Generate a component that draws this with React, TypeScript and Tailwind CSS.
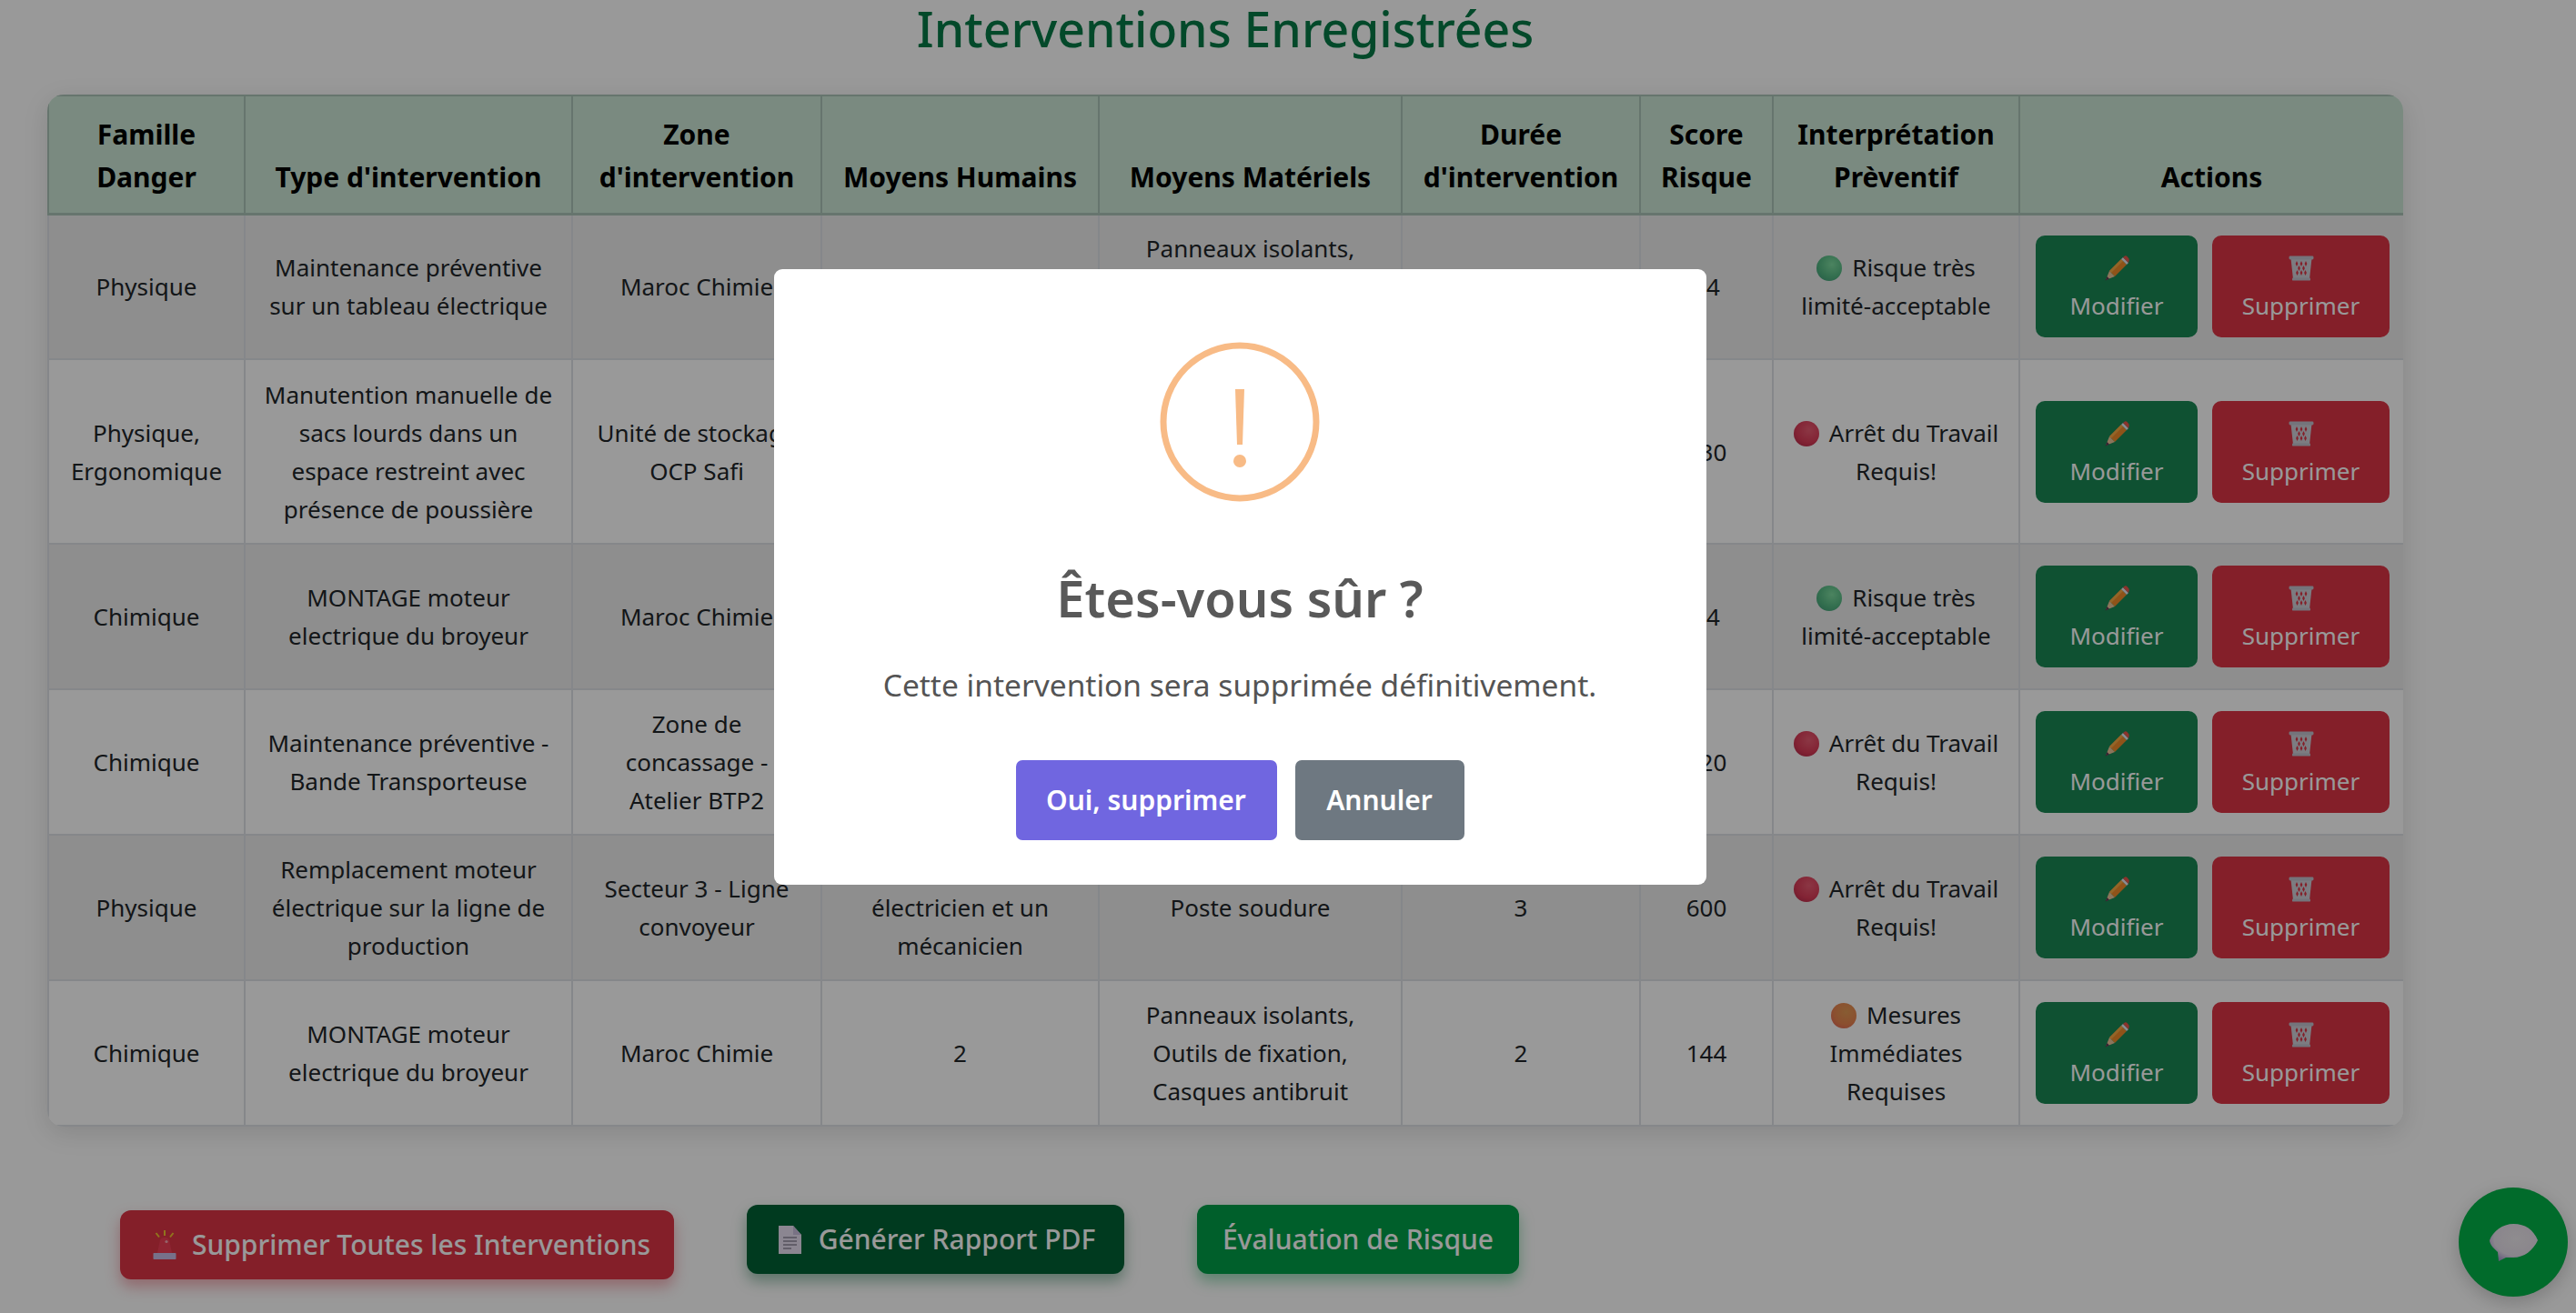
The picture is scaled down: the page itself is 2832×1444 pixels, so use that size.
import type { ReactNode } from "react";

type Level = "green" | "red" | "orange";

type Row = {
  famille: string;
  type: string;
  zone: string;
  humains: string;
  materiels: string;
  duree: string;
  score: string;
  level: Level;
  first: string;
  rest: string;
  height: string;
  odd: boolean;
};

const rows: Row[] = [
  {
    famille: "Physique",
    type: "Maintenance préventive\nsur un tableau électrique",
    zone: "Maroc Chimie",
    humains: "2",
    materiels: "Panneaux isolants,\nOutils de fixation,\nCasques antibruit",
    duree: "2",
    score: "24",
    level: "green",
    first: "Risque très",
    rest: "limité-acceptable",
    height: "h-[160px]",
    odd: true,
  },
  {
    famille: "Physique,\nErgonomique",
    type: "Manutention manuelle de\nsacs lourds dans un\nespace restreint avec\nprésence de poussière",
    zone: "Unité de stockage\nOCP Safi",
    humains: "3",
    materiels: "Chariot,\nGants,\nMasques",
    duree: "3",
    score: "630",
    level: "red",
    first: "Arrêt du Travail",
    rest: "Requis!",
    height: "h-[203px]",
    odd: false,
  },
  {
    famille: "Chimique",
    type: "MONTAGE moteur\nelectrique du broyeur",
    zone: "Maroc Chimie",
    humains: "2",
    materiels: "Panneaux isolants,\nOutils de fixation,\nCasques antibruit",
    duree: "2",
    score: "24",
    level: "green",
    first: "Risque très",
    rest: "limité-acceptable",
    height: "h-[160px]",
    odd: true,
  },
  {
    famille: "Chimique",
    type: "Maintenance préventive -\nBande Transporteuse",
    zone: "Zone de\nconcassage -\nAtelier BTP2",
    humains: "2",
    materiels: "Clés,\nGraisse",
    duree: "4",
    score: "720",
    level: "red",
    first: "Arrêt du Travail",
    rest: "Requis!",
    height: "h-[160px]",
    odd: false,
  },
  {
    famille: "Physique",
    type: "Remplacement moteur\nélectrique sur la ligne de\nproduction",
    zone: "Secteur 3 - Ligne\nconvoyeur",
    humains: "Un\nélectricien et un\nmécanicien",
    materiels: "Poste soudure",
    duree: "3",
    score: "600",
    level: "red",
    first: "Arrêt du Travail",
    rest: "Requis!",
    height: "h-[160px]",
    odd: true,
  },
  {
    famille: "Chimique",
    type: "MONTAGE moteur\nelectrique du broyeur",
    zone: "Maroc Chimie",
    humains: "2",
    materiels: "Panneaux isolants,\nOutils de fixation,\nCasques antibruit",
    duree: "2",
    score: "144",
    level: "orange",
    first: "Mesures",
    rest: "Immédiates\nRequises",
    height: "h-[160px]",
    odd: false,
  },
];

const headers = [
  { label: "Famille\nDanger", width: "w-[216px]" },
  { label: "Type d'intervention", width: "w-[360px]" },
  { label: "Zone\nd'intervention", width: "w-[274px]" },
  { label: "Moyens Humains", width: "w-[305px]" },
  { label: "Moyens Matériels", width: "w-[333px]" },
  { label: "Durée\nd'intervention", width: "w-[262px]" },
  { label: "Score\nRisque", width: "w-[146px]" },
  { label: "Interprétation\nPrèventif", width: "w-[271px]" },
  { label: "Actions", width: "w-[423px]" },
];

function Ball({ level }: { level: Level }) {
  const fill =
    level === "green"
      ? "bg-[radial-gradient(circle_at_60%_35%,#7fdca0,#55b883_55%,#3a9474)]"
      : level === "red"
        ? "bg-[radial-gradient(circle_at_60%_35%,#e85c72,#da3c58_55%,#a82444)]"
        : "bg-[radial-gradient(circle_at_60%_35%,#e29a55,#e8844f_55%,#dc5a5a)]";
  return <span className={`mr-[11px] inline-block h-7 w-7 rounded-full align-[-5px] ${fill}`} />;
}

function PencilIcon() {
  return (
    <svg viewBox="0 0 28 28" className="h-7 w-7">
      <polygon points="6,17 19,4 25,10 12,23" fill="#ee8a2a" />
      <polygon points="6,17 19,4 21,6 8,19" fill="#f7a944" />
      <polygon points="19,4 21,2 27,8 25,10" fill="#e6e6ee" />
      <path d="M21 2 L23 0.5 Q24.5 0 25.5 1 L27.5 3.5 Q28 5 27.5 6 L27 8 Z" fill="#e8554a" />
      <polygon points="6,17 12,23 2,27" fill="#e9c39a" />
      <polygon points="3.5,23 6,25.8 1.5,27.5" fill="#5a3a52" />
    </svg>
  );
}

function TrashIcon() {
  const holes = [
    [9, 9], [14, 9], [19, 9],
    [11.5, 14], [16.5, 14],
    [9.5, 19], [14, 19], [18.5, 19],
  ];
  return (
    <svg viewBox="0 0 28 28" className="h-7 w-7">
      <path d="M2.5 3 L25.5 3 L23 26 L5 26 Z" fill="#cfcfd8" />
      {holes.map(([x, y]) => (
        <polygon key={`${x}-${y}`} points={`${x},${y - 3} ${x + 1.4},${y} ${x},${y + 3} ${x - 1.4},${y}`} fill="#dc3545" />
      ))}
      <rect x="0.5" y="0.5" width="27" height="4" rx="1.4" fill="#c2c2cd" />
      <rect x="4" y="24.4" width="20" height="3.2" rx="1.2" fill="#c2c2cd" />
    </svg>
  );
}

function AlarmIcon() {
  return (
    <svg viewBox="0 0 26 32" className="h-8 w-[26px]">
      <path d="M5 25 L8 11 Q9 8 13 8 Q17 8 18 11 L21 25 Z" fill="#ee3f56" />
      <ellipse cx="15" cy="12.5" rx="1.6" ry="1.6" fill="#f8a7b2" />
      <rect x="0.5" y="25" width="25" height="7" rx="0.8" fill="#c6bde6" />
      <path d="M13 0 V6 M3.5 3 L7 7.5 M22.5 3 L19 7.5" stroke="#f2c230" strokeWidth="2" />
    </svg>
  );
}

function DocIcon() {
  return (
    <svg viewBox="0 0 25 31" className="h-[31px] w-[25px]">
      <path d="M0 0 H16 L25 10 V31 H0 Z" fill="#e8e0f2" />
      <path d="M16 0 L25 10 H16 Z" fill="#c9bfdc" />
      <path d="M5 13 H20 M5 17 H20 M5 21 H20 M5 25 H14" stroke="#8d8699" strokeWidth="1.5" />
    </svg>
  );
}

function ChatIcon() {
  return (
    <svg viewBox="0 0 53 41" className="h-[41px] w-[53px]">
      <defs>
        <radialGradient id="bubble" cx="55%" cy="40%" r="65%">
          <stop offset="0%" stopColor="#eeeaee" />
          <stop offset="70%" stopColor="#e6dfea" />
          <stop offset="100%" stopColor="#a99ad0" />
        </radialGradient>
      </defs>
      <path
        d="M26.5 0 C39 0 48 6 53 18 C48 29 38 37 26 37 C23 37 20 37 18 37 L10 41 L9 31 C5 27 0 23 0 18 C4 8 14 0 26.5 0 Z"
        fill="url(#bubble)"
      />
    </svg>
  );
}

function AlertIcon() {
  return (
    <svg viewBox="0 0 176 176" className="h-[176px] w-[176px]">
      <circle cx="88" cy="88" r="84" fill="none" stroke="#f8bb86" strokeWidth="7" />
      <path d="M83 52 H93 L91 113 H85 Z" fill="#f8bb86" />
      <circle cx="88" cy="131" r="7" fill="#f8bb86" />
    </svg>
  );
}

function ActionButton({ color, icon, label, width }: { color: string; icon: ReactNode; label: string; width: string }) {
  return (
    <button className={`flex h-[112px] flex-col items-center rounded-[10px] pt-[22px] text-[26px] leading-[42px] text-white ${color} ${width}`}>
      {icon}
      <span className="mt-[6px]">{label}</span>
    </button>
  );
}

export default function App() {
  return (
    <div className="relative h-[1444px] overflow-hidden bg-white font-['Noto_Sans',sans-serif] text-[26px] leading-[42px] text-[#212529]">
      <div className="ml-[52px] w-[2590px]">
        <h1 className="h-[104px] text-center text-[53.5px] leading-[64px] font-medium text-[#057a46]">
          Interventions Enregistrées
        </h1>

        <div className="overflow-hidden rounded-[18px] shadow-[0_7px_28px_rgba(0,0,0,0.12)]">
          <table className="w-[2590px] table-fixed border-collapse">
            <thead>
              <tr className="h-[130px] bg-[#cbe6d5]">
                {headers.map((h) => (
                  <th
                    key={h.label}
                    className={`whitespace-pre-line border-2 border-b-[3px] border-[#aac3b7] px-1 pb-4 align-bottom text-[30px] leading-[47px] font-bold text-black ${h.width}`}
                  >
                    {h.label}
                  </th>
                ))}
              </tr>
            </thead>
            <tbody>
              {rows.map((r, i) => (
                <tr key={i} className={`${r.height} ${r.odd ? "bg-[#ededed]" : "bg-white"}`}>
                  {[r.famille, r.type, r.zone, r.humains, r.materiels, r.duree, r.score].map((v, j) => (
                    <td key={j} className="whitespace-pre-line border-2 border-[#dee2e6] p-0 text-center align-middle">
                      {v}
                    </td>
                  ))}
                  <td className="border-2 border-[#dee2e6] p-0 text-center align-middle">
                    <div>
                      <Ball level={r.level} />
                      {r.first}
                    </div>
                    <div className="whitespace-pre-line">{r.rest}</div>
                  </td>
                  <td className="border-2 border-[#dee2e6] p-0 align-middle">
                    <div className="flex justify-center gap-4 pl-[2px]">
                      <ActionButton color="bg-[#198754]" icon={<PencilIcon />} label="Modifier" width="w-[178px]" />
                      <ActionButton color="bg-[#dc3545]" icon={<TrashIcon />} label="Supprimer" width="w-[195px]" />
                    </div>
                  </td>
                </tr>
              ))}
            </tbody>
          </table>
        </div>

        <div className="mt-[86px] flex items-start gap-20 pl-[80px] text-[30px] font-medium text-white">
          <button className="mt-[6px] flex h-[76px] w-[609px] items-center justify-center gap-[17px] rounded-xl bg-[#dc3545] pl-[10px] shadow-[0_8px_16px_rgba(220,53,69,0.4)]">
            <AlarmIcon />
            Supprimer Toutes les Interventions
          </button>
          <button className="flex h-[76px] w-[415px] items-center justify-center gap-[19px] rounded-xl bg-[#006134] pl-[3px] shadow-[0_8px_16px_rgba(0,97,52,0.4)]">
            <DocIcon />
            Générer Rapport PDF
          </button>
          <button className="flex h-[76px] w-[354px] items-center justify-center rounded-xl bg-[#009e48] shadow-[0_8px_16px_rgba(0,158,72,0.4)]">
            Évaluation de Risque
          </button>
        </div>
      </div>

      <button className="absolute right-[9px] bottom-[18px] flex h-[120px] w-[120px] items-center justify-center rounded-full bg-[#03b248] shadow-[0_6px_20px_rgba(0,0,0,0.2)]">
        <ChatIcon />
      </button>

      <div className="absolute inset-0 flex items-center justify-center bg-black/40 pr-[106px] pb-[175px]">
        <div className="flex h-[677px] w-[1025px] flex-col items-center rounded-[9px] bg-white pt-[80px]">
          <AlertIcon />
          <h2 className="mt-[69px] text-[56px] leading-[72px] font-semibold text-[#595959]">Êtes-vous sûr ?</h2>
          <p className="mt-[38px] text-[33.5px] leading-[44px] text-[#545454]">
            Cette intervention sera supprimée définitivement.
          </p>
          <div className="mt-[61px] flex gap-5 text-[30px] font-semibold text-white">
            <button className="h-[88px] w-[287px] rounded-[7px] bg-[#7066e0]">Oui, supprimer</button>
            <button className="h-[88px] w-[186px] rounded-[7px] bg-[#6e7881]">Annuler</button>
          </div>
        </div>
      </div>
    </div>
  );
}
